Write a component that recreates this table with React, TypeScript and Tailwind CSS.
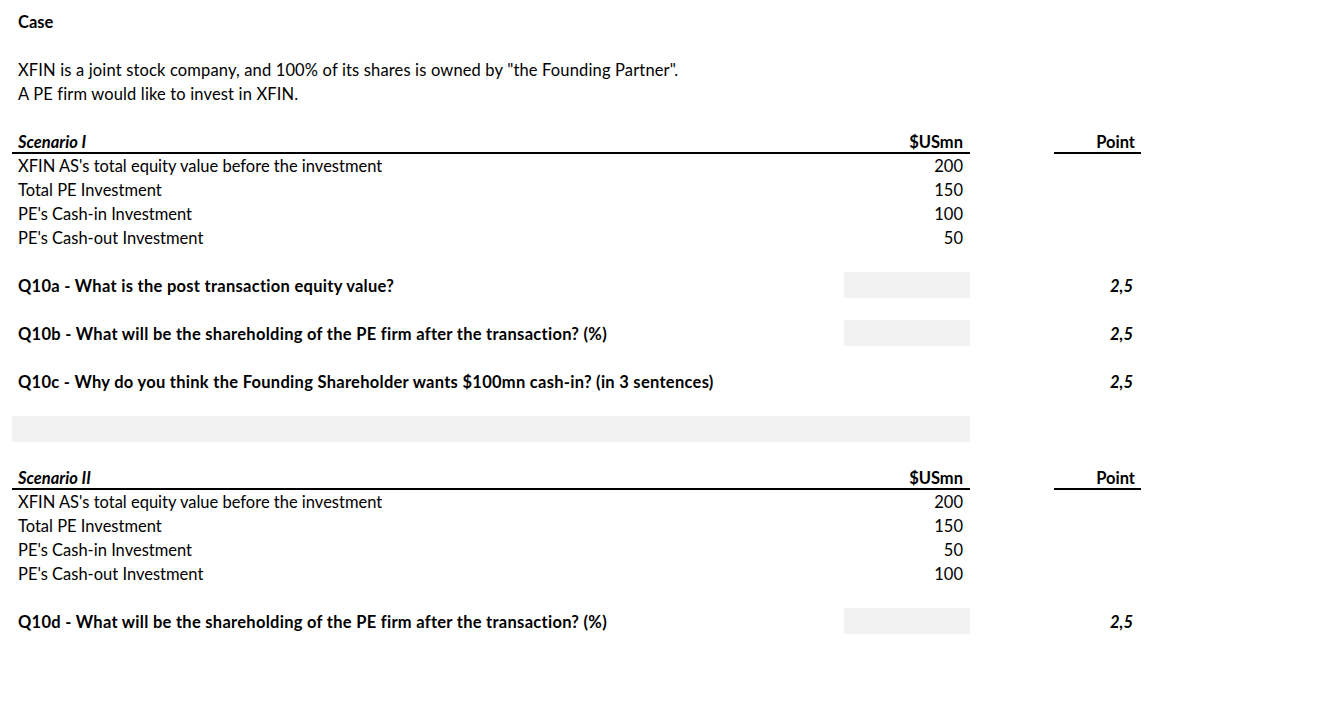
import React from "react";

type Row =
  | { kind: "blank" }
  | { kind: "text"; label: string; bold?: boolean }
  | { kind: "head"; label: string }
  | { kind: "item"; label: string; value: string }
  | { kind: "question"; label: string; box?: boolean }
  | { kind: "shade" };

const rows: Row[] = [
  { kind: "text", label: "Case", bold: true },
  { kind: "blank" },
  {
    kind: "text",
    label:
      'XFIN is a joint stock company, and 100% of its shares is owned by "the Founding Partner".',
  },
  { kind: "text", label: "A PE firm would like to invest in XFIN." },
  { kind: "blank" },
  { kind: "head", label: "Scenario I" },
  { kind: "item", label: "XFIN AS's total equity value before the investment", value: "200" },
  { kind: "item", label: "Total PE Investment", value: "150" },
  { kind: "item", label: "PE's Cash-in Investment", value: "100" },
  { kind: "item", label: "PE's Cash-out Investment", value: "50" },
  { kind: "blank" },
  { kind: "question", label: "Q10a - What is the post transaction equity value?", box: true },
  { kind: "blank" },
  {
    kind: "question",
    label: "Q10b - What will be the shareholding of the PE firm after the transaction? (%)",
    box: true,
  },
  { kind: "blank" },
  {
    kind: "question",
    label:
      "Q10c - Why do you think the Founding Shareholder wants $100mn cash-in? (in 3 sentences)",
  },
  { kind: "blank" },
  { kind: "shade" },
  { kind: "blank" },
  { kind: "head", label: "Scenario II" },
  { kind: "item", label: "XFIN AS's total equity value before the investment", value: "200" },
  { kind: "item", label: "Total PE Investment", value: "150" },
  { kind: "item", label: "PE's Cash-in Investment", value: "50" },
  { kind: "item", label: "PE's Cash-out Investment", value: "100" },
  { kind: "blank" },
  {
    kind: "question",
    label: "Q10d - What will be the shareholding of the PE firm after the transaction? (%)",
    box: true,
  },
];

// one spreadsheet row = 24px, text vertically centred
const cell = "h-6 flex items-center leading-5 whitespace-nowrap";

function SheetRow({ row }: { row: Row }) {
  if (row.kind === "blank") {
    return <div className="col-span-4 h-6" />;
  }

  if (row.kind === "text") {
    return (
      <div
        className={`col-span-4 ${cell} pl-[6px] ${
          row.bold ? "font-bold" : "tracking-[0.15px]"
        }`}
      >
        {row.label}
      </div>
    );
  }

  if (row.kind === "head") {
    return (
      <>
        <div className={`col-span-2 ${cell} pl-[6px] pt-[2px] font-bold border-b-2 border-black`}>
          <span className="flex-1 italic">{row.label}</span>
          <span className="pr-[7px]">$USmn</span>
        </div>
        <div />
        <div className={`${cell} justify-end pr-[6px] pt-[2px] font-bold border-b-2 border-black`}>
          Point
        </div>
      </>
    );
  }

  if (row.kind === "item") {
    return (
      <>
        <div className={`${cell} pl-[6px]`}>{row.label}</div>
        <div className={`${cell} justify-end pr-[7px]`}>{row.value}</div>
        <div />
        <div />
      </>
    );
  }

  if (row.kind === "question") {
    return (
      <>
        <div className={`${cell} pl-[6px] font-bold tracking-[0.28px]`}>{row.label}</div>
        <div className={`h-[26px] -mt-[2px] ${row.box ? "bg-[#f2f2f2]" : ""}`} />
        <div />
        <div className={`${cell} justify-end pr-[8px] font-bold italic`}>2,5</div>
      </>
    );
  }

  return (
    <>
      <div className="col-span-2 h-[26px] -mt-[2px] bg-[#f2f2f2]" />
      <div />
      <div />
    </>
  );
}

export default function App() {
  return (
    <div className="min-h-screen w-full bg-white text-black pt-[10px] pl-3 font-['Lato','Open_Sans',sans-serif] text-[16.5px]">
      <div className="grid grid-cols-[832px_126px_84px_87px]">
        {rows.map((row, i) => (
          <SheetRow key={i} row={row} />
        ))}
      </div>
    </div>
  );
}
